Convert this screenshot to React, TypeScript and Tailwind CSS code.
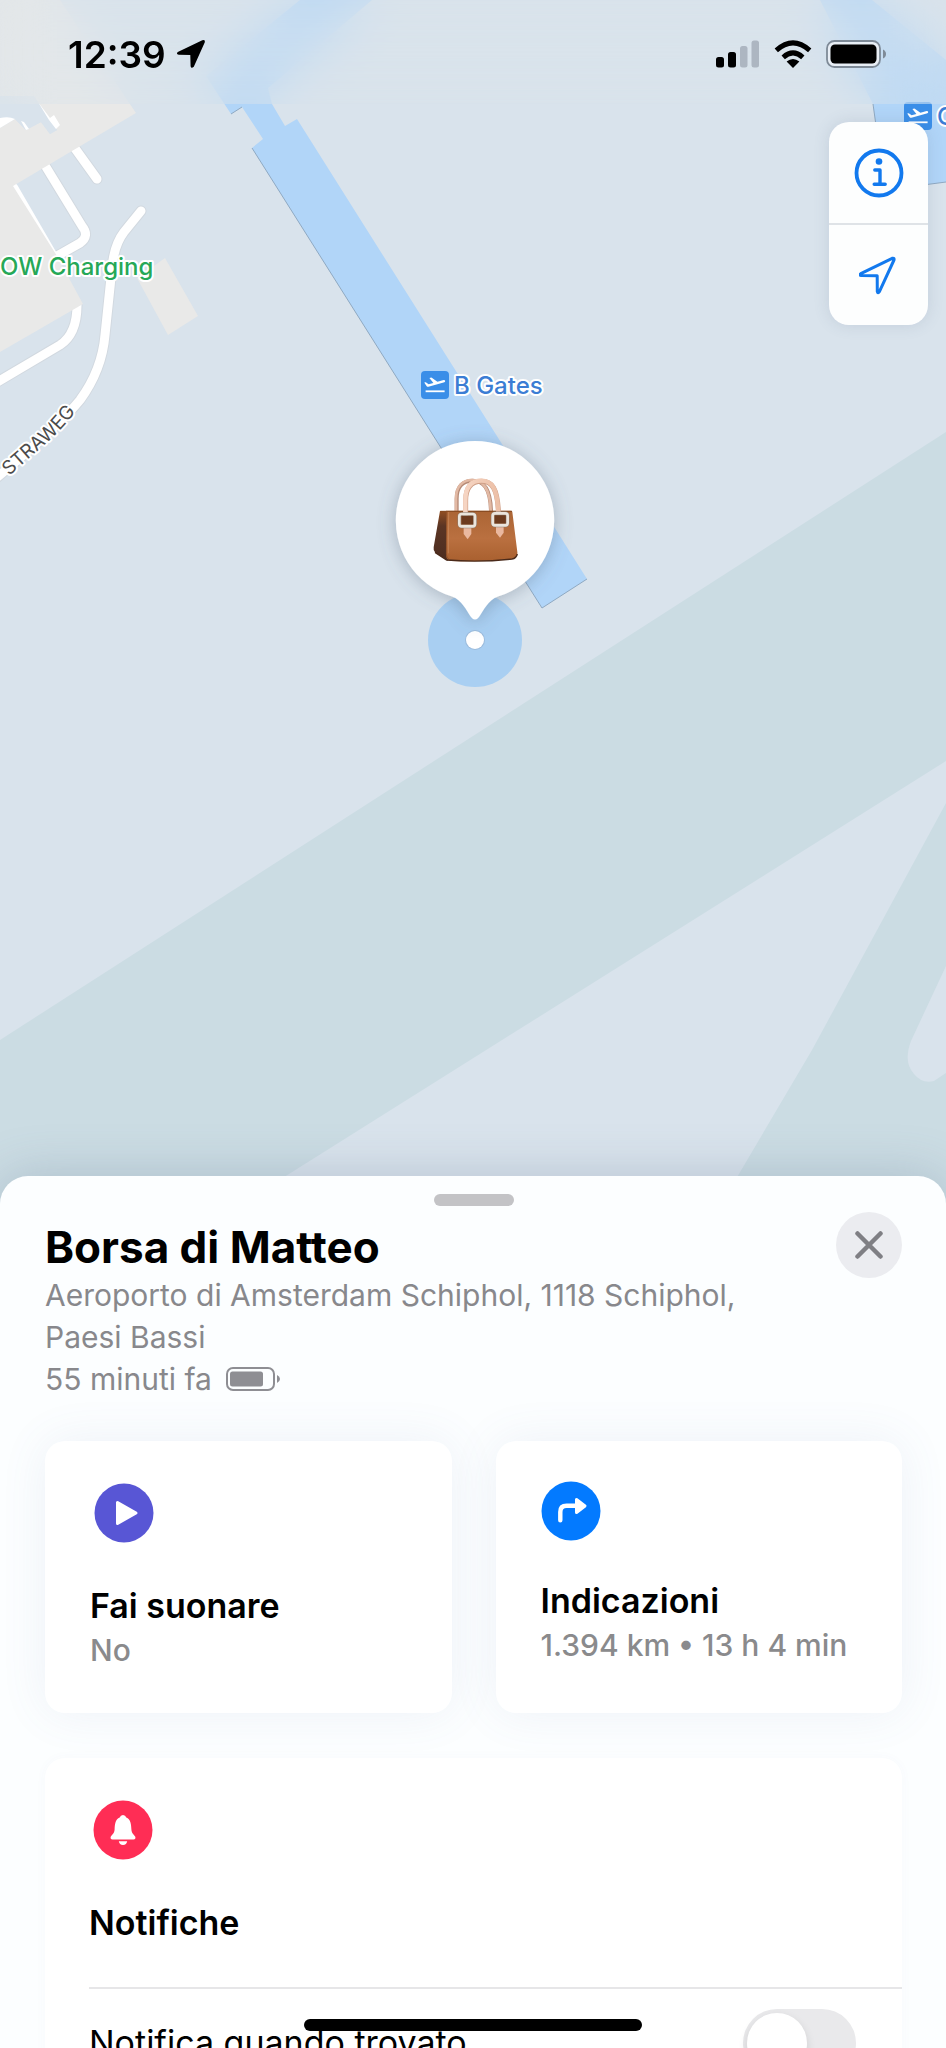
import { useState } from "react";
import type { ReactNode } from "react";

interface ActionCardProps {
  icon: ReactNode;
  title: string;
  subtitle: string;
  className: string;
}

function PlaneIcon({ x, y }: { x: number; y: number }) {
  return (
    <g transform={`translate(${x} ${y})`}>
      <rect width="28" height="28" rx="4" fill="#3a8ee8" />
      <path
        d="M3.2 11.6 4.8 11.2 7.6 13.2 12.4 11.9 8.4 6.9 10.4 6.4 16.4 10.7 21.8 9.2Q24 8.8 24.2 10 24.3 11 22.6 11.6L7.4 15.8Q6.4 16 5.7 15.2Z"
        fill="#fff"
      />
      <path d="M4.6 20.3H23.6" stroke="#fff" strokeWidth="1.8" />
    </g>
  );
}

function HandbagDrawing() {
  return (
    <g transform="translate(430 470) scale(.3333)">
      <defs>
        <linearGradient id="bag-front" x1="0" y1="0" x2="0" y2="1">
          <stop offset="0" stopColor="#ab6535" />
          <stop offset=".55" stopColor="#ba7040" />
          <stop offset="1" stopColor="#a9602f" />
        </linearGradient>
        <linearGradient id="bag-side" x1="0" y1="0" x2="0" y2="1">
          <stop offset="0" stopColor="#914e22" />
          <stop offset=".3" stopColor="#5b3524" />
          <stop offset="1" stopColor="#4c2d20" />
        </linearGradient>
        <linearGradient id="bag-handle" x1="0" y1="0" x2="1" y2="0">
          <stop offset="0" stopColor="#f6d5c3" />
          <stop offset="1" stopColor="#ecbfa6" />
        </linearGradient>
      </defs>
      {/* rear handle */}
      <path d="M80 130V86C80 48 101 32 128 32 158 32 182 50 183 126" fill="none" stroke="#b58a76" strokeWidth="12" />
      <path d="M78 128V86C78 46 100 30 126 30 156 30 181 50 182 124" fill="none" stroke="#e2b9a4" strokeWidth="8" />
      {/* body */}
      <path d="M30 123 54 124 54 272 16 248Q9 242 11 232Z" fill="url(#bag-side)" />
      <path d="M48 122H243Q246 122 247 126L262 246Q264 264 246 267 150 277 64 273 48 273 48 252Z" fill="url(#bag-front)" />
      <path d="M15 247 50 270Q150 278 246 267 259 265 262 252" fill="none" stroke="#4a2a1a" strokeWidth="4" />
      <path d="M50 126 49 252Q49 266 60 270" fill="none" stroke="#7b4421" strokeWidth="2" />
      <path d="M56 126 55 250" fill="none" stroke="#c98a5c" strokeWidth="3" opacity=".7" />
      <path d="M31 124H246" stroke="#83481f" strokeWidth="3" />
      {/* front handle */}
      <path d="M107 140V92C107 48 128 34 155 34 184 34 204 50 206 140" fill="none" stroke="#cf9f87" strokeWidth="15" />
      <path d="M106 140V92C106 46 128 32 154 32 183 32 204 48 205 140" fill="none" stroke="url(#bag-handle)" strokeWidth="13" />
      {/* straps */}
      <path d="M101 168H124V192L113 208 101 192Z" fill="#eab89f" />
      <path d="M198 165H221V188L210 203 198 188Z" fill="#eab89f" />
      {/* buckles */}
      <rect x="94" y="137" width="36" height="26" fill="#6c3b1e" />
      <rect x="194" y="135" width="34" height="25" fill="#6c3b1e" />
      <rect x="88" y="132" width="47" height="37" rx="7" fill="none" stroke="#8c7d70" strokeWidth="11" />
      <rect x="188" y="130" width="45" height="36" rx="7" fill="none" stroke="#8c7d70" strokeWidth="11" />
      <rect x="88" y="132" width="47" height="37" rx="7" fill="none" stroke="#ebe5dc" strokeWidth="8" />
      <rect x="188" y="130" width="45" height="36" rx="7" fill="none" stroke="#ebe5dc" strokeWidth="8" />
    </g>
  );
}

function MapCanvas() {
  return (
    <svg className="absolute inset-x-0 top-0 w-full" viewBox="0 0 946 1260" aria-label="Mappa">
      <defs>
        <filter id="pin-shadow" x="-40%" y="-40%" width="180%" height="180%">
          <feDropShadow dx="0" dy="2" stdDeviation="9" floodColor="#54657c" floodOpacity=".38" />
        </filter>
        <path id="straweg" d="M9 476 50 440Q73 419 94 384" />
      </defs>
      <rect width="946" height="1260" fill="#d9e3ec" />

      {/* taxiways */}
      <path d="M0 1040 946 432V761L200 1230H0Z" fill="#cbdce3" />
      <path d="M946 803 812 1050 700 1240H946Z" fill="#cbdce3" />
      <path d="M946 966 911 1041Q903 1062 914 1074 922 1084 934 1081L946 1073Z" fill="#d9e3ec" />

      {/* roads */}
      <g fill="none" strokeLinecap="round" strokeLinejoin="round">
        <g stroke="#d2d9e0" strokeWidth="11">
          <path d="M141 211 124 232Q114 245 112 268L105 335Q102 370 80 400 60 425-6 480" />
          <path d="M46 167 82 226Q90 236 80 243L50 260" />
          <path d="M74 147 97 179" />
          <path d="M-6 384 60 345Q77 334 77 305" />
        </g>
        <g stroke="#fff" strokeWidth="9">
          <path d="M141 211 124 232Q114 245 112 268L105 335Q102 370 80 400 60 425-6 480" />
          <path d="M46 167 82 226Q90 236 80 243L50 260" />
          <path d="M74 147 97 179" />
          <path d="M-6 384 60 345Q77 334 77 305" />
        </g>
        <path d="M15 187 55 256" stroke="#fff" strokeWidth="6" />
      </g>

      {/* buildings */}
      <path d="M0 0H60L136 113 13 186 57 256 83 304 0 352V128L15 119 26 130 41 122 50 134 57 130 36 100 0 100Z" fill="#e9e9e8" />
      <path d="M0 96H34L57 130 50 134 41 122 26 130 15 119Q8 116 0 118Z" fill="#d9e3ec" />
      <path d="M0 118Q9 116 15 119L0 128Z" fill="#fff" />
      <path d="M21 121 24 122 29 129 26 130Z" fill="#fff" />
      <path d="M38 102 50 118 54 115 60 125 56 129 49 120" fill="#fff" />
      <path d="M165 258 198 316 168 335 137 278Z" fill="#e9e9e8" />

      {/* B pier */}
      <path
        d="M231 114 206 76 300 0H372L268 88 272 104 285 126 297 119 587 579 542 608 252 148 263 139 242 107Z"
        fill="#b1d5f8"
      />
      <path d="M231 114 242 107M252 148 542 608 587 579" fill="none" stroke="#8fa9c2" strokeWidth="1" />

      {/* C pier */}
      <path d="M820 0H872L946 60V182L885 190 873 104Z" fill="#b1d5f8" />
      <path d="M873 104 885 190 946 182" fill="none" stroke="#8fa9c2" strokeWidth="1" />
      <PlaneIcon x={904} y={102} />
      <PlaneIcon x={421} y={371} />

      {/* labels */}
      <g className="font-['Inter',sans-serif]" stroke="#fff" strokeWidth="4" strokeLinejoin="round" paintOrder="stroke">
        <text x="0" y="275" fontSize="24" fontWeight="500" fill="#26a857">OW Charging</text>
        <text x="454" y="394" fontSize="24" fontWeight="500" fill="#3b7dd4">B Gates</text>
        <text x="937" y="125" fontSize="24" fontWeight="500" fill="#3b7dd4">C</text>
        <text fontSize="19" fill="#4b4b4b">
          <textPath href="#straweg">STRAWEG</textPath>
        </text>
      </g>

      {/* item position */}
      <circle cx="475" cy="640" r="47" fill="#a9cff2" />
      <circle cx="475" cy="640" r="10" fill="#9bbbdc" />
      <circle cx="475" cy="640" r="9" fill="#fff" />
      <path
        d="M475 441A79.500 79.500 0 0 1 498 596.500C488 600 484 610 479 617Q475 622 471 617C466 610 462 600 452 596.500A79.500 79.500 0 0 1 475 441Z"
        fill="#fff"
        filter="url(#pin-shadow)"
      />
      <HandbagDrawing />
    </svg>
  );
}

function StatusBar() {
  return (
    <header className="relative flex h-26 items-center justify-between bg-[#d9e3ec]/40 pt-1 pr-[59px] pl-[68px] backdrop-blur-xl">
      <div className="flex items-center gap-2.5">
        <span className="text-[37px] leading-none font-semibold">12:39</span>
        <svg className="h-[30px] w-[30px]" viewBox="0 0 30 30">
          <path d="M2.300 12.800 26.300 1.300Q29.500.300 28.700 3.600L17.800 27.800Q15.200 30.200 14.600 27.200L14.300 16 2.700 15.700Q-.600 14.700 2.300 12.800Z" />
        </svg>
      </div>
      <div className="flex items-center gap-3.5">
        <svg className="h-7 w-11" viewBox="0 0 44 28">
          <rect x="0" y="17" width="8" height="10.500" rx="2.500" />
          <rect x="12" y="12" width="8" height="15.500" rx="2.500" />
          <rect x="24" y="6" width="7.500" height="21.500" rx="2.500" fill="#adb6c1" />
          <rect x="35.500" y="0.500" width="7.500" height="27" rx="2.500" fill="#adb6c1" />
        </svg>
        <svg className="h-7 w-[38px]" viewBox="0 0 38 28">
          <path d="M19 28 12.600 21.600Q19 16.200 25.400 21.600Z" />
          <path d="M9.200 17.300Q19 8.600 28.800 17.300" fill="none" stroke="#000" strokeWidth="5" />
          <path d="M2.300 10.300Q19-4.600 35.700 10.300" fill="none" stroke="#000" strokeWidth="5" />
        </svg>
        <svg className="h-7 w-[61px]" viewBox="0 0 61 28">
          <rect x="1" y="1" width="53" height="26" rx="7.500" fill="#e8eef5" stroke="#7e8a97" strokeWidth="1.800" />
          <rect x="4.500" y="4.500" width="46" height="19" rx="4.500" />
          <path d="M57 9.500Q60 11 60 14T57 18.500Z" fill="#7e8a97" />
        </svg>
      </div>
    </header>
  );
}

function MapControls() {
  return (
    <div className="relative mt-[18px] mr-[18px] flex w-[99px] flex-col divide-y-2 divide-[#dfe3e7] self-end rounded-[20px] bg-[#fdfefe] shadow-[0_0_16px_rgba(80,100,130,0.16)]">
      <button type="button" aria-label="Informazioni" className="flex h-[103px] items-center justify-center">
        <svg className="h-[50px] w-[50px]" viewBox="0 0 50 50" fill="none" stroke="#1279ee" strokeLinecap="round" strokeLinejoin="round">
          <circle cx="25" cy="25" r="22.500" strokeWidth="3.800" />
          <circle cx="25" cy="13.500" r="3.300" fill="#1279ee" stroke="none" />
          <path d="M20.800 22H26V36M20.200 36.300H31.200" strokeWidth="3.400" />
        </svg>
      </button>
      <button type="button" aria-label="Posizione attuale" className="flex h-[100px] items-center justify-center">
        <svg className="h-10 w-10" viewBox="1 0 40 40" fill="none" stroke="#1279ee" strokeWidth="3" strokeLinejoin="round">
          <path d="M2.800 18.600Q.800 20.200 3.200 20.500L19.200 20.800 19.300 36.500Q20 39 21.300 36.800L36 5Q36.500 2.600 34.200 3.300Z" />
        </svg>
      </button>
    </div>
  );
}

function ActionCard({ icon, title, subtitle, className }: ActionCardProps) {
  return (
    <button
      type="button"
      className={`flex flex-col items-start rounded-[20px] bg-white pl-[45px] text-left shadow-[0_0_48px_rgba(90,110,170,0.09)] ${className}`}
    >
      {icon}
      <span>
        <span className="block text-[34px] leading-11 font-semibold">{title}</span>
        <span className="block text-[30px] leading-11 font-medium whitespace-nowrap text-[#8a8a8c]">{subtitle}</span>
      </span>
    </button>
  );
}

export default function App() {
  const [notifyWhenFound, setNotifyWhenFound] = useState(false);

  return (
    <div className="relative grid h-screen grid-rows-[147fr_109fr] overflow-hidden bg-[#d9e3ec] font-['Inter',sans-serif] text-black">
      <MapCanvas />

      <div className="flex min-h-0 flex-col">
        <StatusBar />
        <MapControls />
      </div>

      <main className="relative min-h-0 rounded-t-[28px] bg-[#fcfeff] pt-[18px] pr-11 pl-[45px] shadow-[0_0_50px_rgba(90,110,140,0.28)]">
        <div className="mx-auto h-3 w-20 rounded-full bg-[#c3c3c6]" />

        <div className="mt-1.5 flex items-start justify-between">
          <div className="pt-2">
            <h1 className="text-[44px] leading-[54px] font-bold">Borsa di Matteo</h1>
            <p className="max-w-[720px] text-[30px] leading-[42px] text-[#88888c]">
              Aeroporto di Amsterdam Schiphol, 1118 Schiphol, Paesi Bassi
            </p>
            <p className="flex items-center gap-3.5 text-[30px] leading-[42px] text-[#88888c]">
              55 minuti fa
              <svg className="h-6 w-[55px]" viewBox="0 0 55 24">
                <rect x="1" y="1" width="47" height="22" rx="6" fill="none" stroke="#8e8e93" strokeWidth="2" />
                <rect x="4" y="4.500" width="33" height="15" rx="2.500" fill="#8e8e93" />
                <path d="M51 8Q54 9.500 54 12T51 16Z" fill="#8e8e93" />
              </svg>
            </p>
          </div>
          <button
            type="button"
            aria-label="Chiudi"
            className="flex h-[66px] w-[66px] shrink-0 items-center justify-center rounded-full bg-[#ebecf0]"
          >
            <svg className="h-7 w-7" viewBox="0 0 28 28" stroke="#7f7f84" strokeWidth="4.500" strokeLinecap="round">
              <path d="M2.500 2.500 25.500 25.500M25.500 2.500 2.500 25.500" />
            </svg>
          </button>
        </div>

        <div className="mt-[41px] grid grid-cols-2 gap-11">
          <ActionCard
            title="Fai suonare"
            subtitle="No"
            className="gap-[41px] pt-[42px] pb-[41px]"
            icon={
              <svg className="ml-1 h-15 w-15" viewBox="0 0 60 60">
                <circle cx="30" cy="30" r="29.500" fill="#5856d5" />
                <path d="M23.500 19.500V40.500L42 30Z" fill="#fff" stroke="#fff" strokeWidth="3" strokeLinejoin="round" />
              </svg>
            }
          />
          <ActionCard
            title="Indicazioni"
            subtitle="1.394 km • 13 h 4 min"
            className="gap-[38px] pt-10"
            icon={
              <svg className="h-15 w-15" viewBox="0 0 60 60">
                <circle cx="30" cy="30" r="29.500" fill="#037aff" />
                <path d="M19.300 39.300V31Q19.300 24.800 25.500 24.800H36" fill="none" stroke="#fff" strokeWidth="4.400" strokeLinecap="round" />
                <path d="M35.500 18.500V31.500L44 25Z" fill="#fff" stroke="#fff" strokeWidth="3" strokeLinejoin="round" />
              </svg>
            }
          />
        </div>

        <section className="mt-[45px] rounded-[20px] bg-white pt-[42px] pl-11 shadow-[0_0_12px_rgba(90,110,170,0.03)]">
          <svg className="ml-1 h-15 w-15" viewBox="0 0 60 60">
            <circle cx="30" cy="30" r="29.500" fill="#ff2d55" />
            <path
              d="M30 15Q32.500 15 33.300 17.600C37.500 19.300 38.200 24 38.400 29.500 38.600 33.500 41 34.300 42.300 36.800Q43 39.300 40.500 39.400H19.500Q17 39.300 17.700 36.800C19 34.300 21.400 33.500 21.600 29.500 21.800 24 22.500 19.300 26.700 17.600Q27.500 15 30 15Z"
              fill="#fff"
            />
            <path d="M25.800 41.300H34.200Q33.600 45 30 45T25.800 41.300Z" fill="#fff" />
          </svg>
          <h2 className="mt-[41px] text-[34px] leading-11 font-semibold">Notifiche</h2>
          <div className="mt-[42px] flex items-center justify-between border-t-2 border-[#e6e6e8] py-5 pr-[46px]">
            <label htmlFor="notify-found" className="text-[34px] leading-11">
              Notifica quando trovato
            </label>
            <input
              id="notify-found"
              type="checkbox"
              role="switch"
              checked={notifyWhenFound}
              onChange={(e) => setNotifyWhenFound(e.target.checked)}
              className="h-[68px] w-[113px] appearance-none rounded-full bg-[#e9e9eb] p-1 before:block before:h-[60px] before:w-[60px] before:rounded-full before:bg-white before:shadow-[0_4px_10px_rgba(0,0,0,0.12)] checked:bg-[#34c759] checked:before:ml-[45px]"
            />
          </div>
        </section>
      </main>

      {/* home indicator */}
      <div className="absolute bottom-[17px] left-1/2 h-3 w-[338px] -translate-x-1/2 rounded-full bg-black" />
    </div>
  );
}
